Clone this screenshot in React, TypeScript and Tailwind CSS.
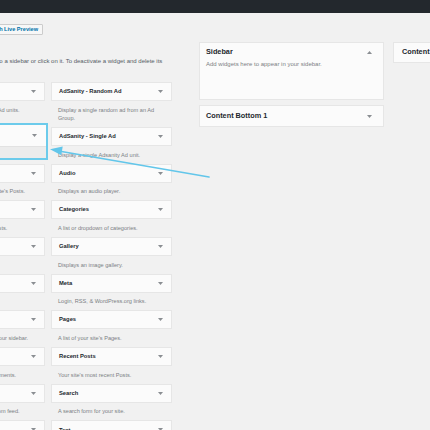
import React from 'react';

type Widget = { title: string; desc: string };

const leftWidgets: Widget[] = [
  { title: 'Archives', desc: "A monthly archive of your site's Posts." },
  { title: 'Calendar', desc: "A calendar of your site's Posts." },
  { title: 'Custom HTML', desc: 'Arbitrary HTML code.' },
  { title: 'Image', desc: 'Displays an image.' },
  { title: 'Navigation Menu', desc: 'Add a navigation menu to your sidebar.' },
  { title: 'Recent Comments', desc: "Your site's most recent comments." },
  { title: 'RSS', desc: 'Entries from any RSS or Atom feed.' },
  { title: 'Tag Cloud', desc: 'A cloud of your most used tags.' },
];

const rightWidgets: Widget[] = [
  { title: 'AdSanity - Random Ad', desc: 'Display a single random ad from an Ad Group.' },
  { title: 'AdSanity - Single Ad', desc: 'Display a single Adsanity Ad unit.' },
  { title: 'Audio', desc: 'Displays an audio player.' },
  { title: 'Categories', desc: 'A list or dropdown of categories.' },
  { title: 'Gallery', desc: 'Displays an image gallery.' },
  { title: 'Meta', desc: 'Login, RSS, & WordPress.org links.' },
  { title: 'Pages', desc: "A list of your site's Pages." },
  { title: 'Recent Posts', desc: "Your site's most recent Posts." },
  { title: 'Search', desc: 'A search form for your site.' },
  { title: 'Text', desc: 'Arbitrary text.' },
];

const Caret = ({ up = false }: { up?: boolean }) => (
  <svg width="5" height="3" viewBox="0 0 5 3" className="shrink-0">
    <polygon points={up ? '0,3 5,3 2.5,0' : '0,0 5,0 2.5,3'} fill="#8a8e92" />
  </svg>
);

const WidgetBox = ({ w, nowrap = false }: { w: Widget; nowrap?: boolean }) => (
  <div>
    <div className="h-[19px] flex items-center justify-between pl-[7px] pr-[8px] bg-[#fbfbfb] border border-[#e6e6e6]">
      <span className="text-[5.8px] font-semibold text-[#23282d] whitespace-nowrap">{w.title}</span>
      <Caret />
    </div>
    <p
      className={
        nowrap
          ? 'px-[7px] pt-[4.7px] pb-[4.7px] text-[5.6px] leading-[8.3px] text-[#7b7f84] whitespace-nowrap'
          : 'px-[7px] pt-[4.7px] pb-[4.7px] text-[5.6px] leading-[8.3px] text-[#7b7f84]'
      }
    >
      {w.desc}
    </p>
  </div>
);

const App = () => {
  return (
    <div className="relative w-[430px] h-[430px] overflow-hidden bg-[#f1f1f1] font-['Liberation_Sans',Arial,sans-serif]">
      <div className="h-[13px] bg-[#23282d]" />

      <div className="flex">
        {/* available widgets */}
        <div className="-ml-[76px] w-[248px] shrink-0 pt-[11px]">
          <div className="ml-[40px] flex w-fit h-[11px] items-center px-[4px] border border-[#cccccc] bg-[#f7f7f7] rounded-[1px]">
            <span className="text-[5.6px] font-semibold text-[#0073aa] whitespace-nowrap">Manage with Live Preview</span>
          </div>
          <p className="ml-[1px] mt-[22px] text-[6px] leading-[8px] text-[#555d66] whitespace-nowrap">
            To activate a widget drag it to a sidebar or click on it. To deactivate a widget and delete its
            <br />
            settings, drag it back.
          </p>

          <div className="mt-[9px] grid grid-cols-[121px_121px] gap-x-[6px]">
            <div className="flex flex-col">
              <WidgetBox nowrap w={{ title: 'AdSanity - Ad Group', desc: 'Display a random group of Ad units.' }} />
              <div className="mt-[4.3px] mb-[3.7px] w-[124px] h-[37px] border-2 border-[#6ccbeb] flex flex-col">
                <div className="h-[21px] flex items-center justify-between pl-[7px] pr-[9px] bg-[#fbfbfb]">
                  <span className="text-[5.8px] font-semibold text-[#23282d] whitespace-nowrap">AdSanity - Rotating Ad</span>
                  <Caret />
                </div>
                <div className="flex-1 bg-[#ececec] border-t border-[#e2e2e2]" />
              </div>
              {leftWidgets.map((w) => (
                <WidgetBox key={w.title} w={w} nowrap />
              ))}
            </div>
            <div className="flex flex-col">
              {rightWidgets.map((w) => (
                <WidgetBox key={w.title} w={w} />
              ))}
            </div>
          </div>
        </div>

        {/* sidebars */}
        <div className="ml-[27px] w-[185px] shrink-0 pt-[29px] flex flex-col gap-[5px]">
          <div className="h-[58px] bg-[#fbfbfb] border border-[#e6e6e6] pl-[6px] pr-[11px] pt-[5px]">
            <div className="flex items-center justify-between h-[8px]">
              <span className="text-[7.3px] font-semibold text-[#23282d]">Sidebar</span>
              <Caret up />
            </div>
            <p className="mt-[5px] text-[6px] leading-[7px] text-[#7b7f84]">Add widgets here to appear in your sidebar.</p>
          </div>
          <div className="h-[22px] bg-[#fbfbfb] border border-[#e6e6e6] pl-[6px] pr-[11px] flex items-center justify-between">
            <span className="text-[7.3px] font-semibold text-[#23282d]">Content Bottom 1</span>
            <Caret />
          </div>
        </div>

        <div className="ml-[9px] w-[185px] shrink-0 pt-[29px]">
          <div className="h-[21px] bg-[#fbfbfb] border border-[#e6e6e6] pl-[8px] flex items-center">
            <span className="text-[7.3px] font-semibold text-[#23282d]">Content Bottom 2</span>
          </div>
        </div>
      </div>

      {/* drag hint arrow */}
      <svg className="absolute left-0 top-0 pointer-events-none" width="430" height="430" viewBox="0 0 430 430">
        <line x1="209" y1="177" x2="60" y2="151.3" stroke="#62c6ea" strokeWidth="1.6" strokeLinecap="round" />
        <polygon points="50,149.2 62.7,146.6 61.3,155.2" fill="#62c6ea" />
      </svg>
    </div>
  );
};

export default App;
